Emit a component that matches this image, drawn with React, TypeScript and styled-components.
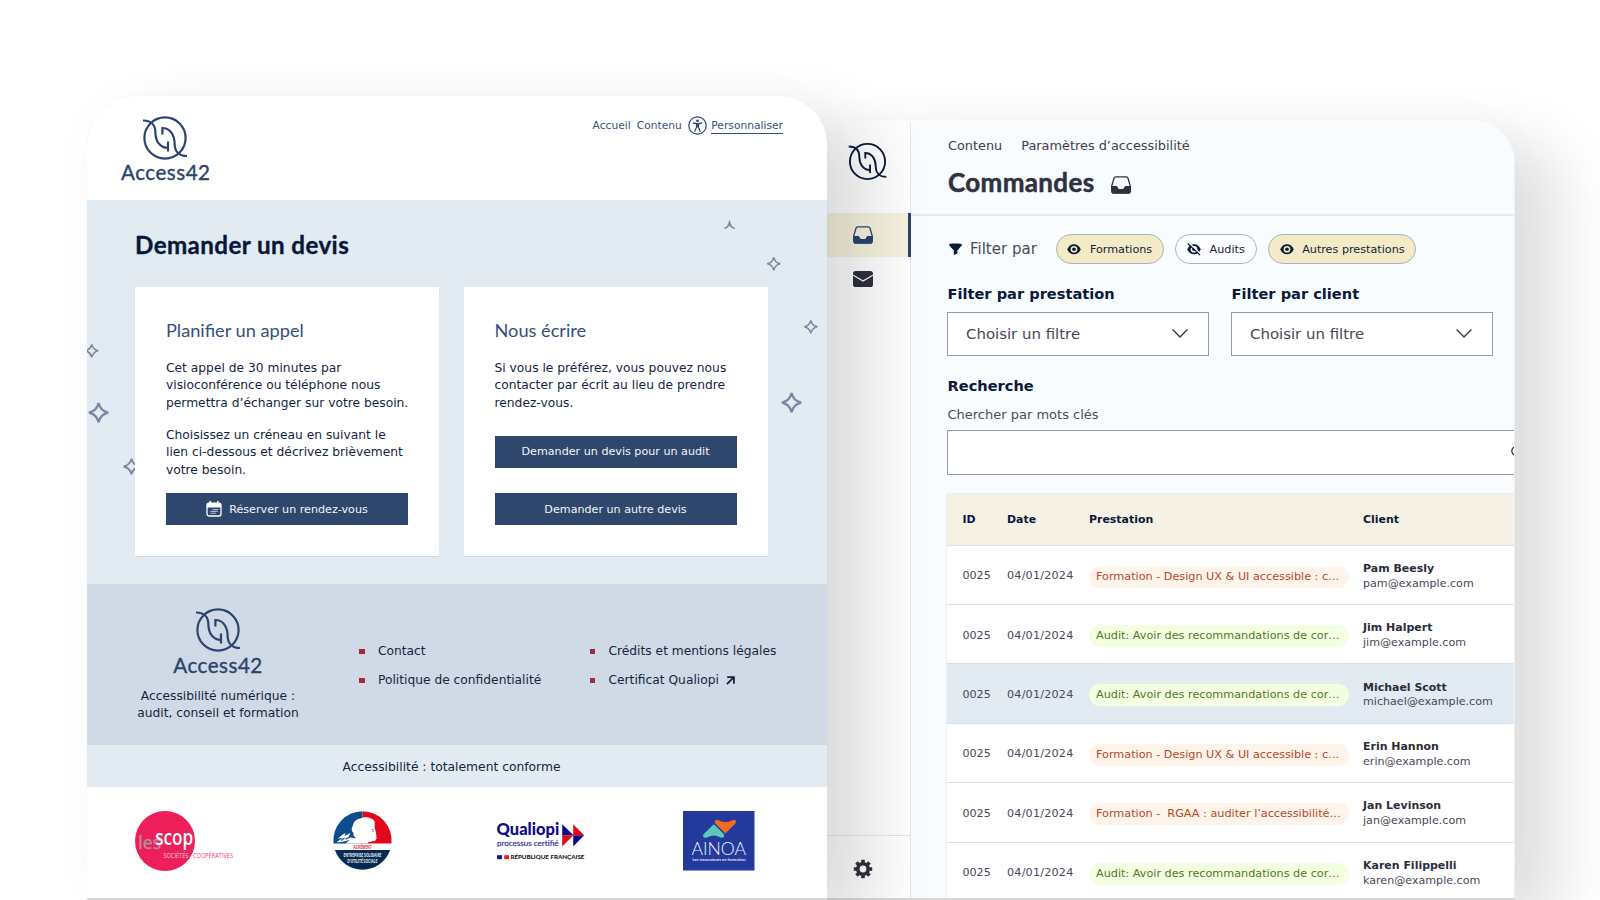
import React from 'react';
import styled, { createGlobalStyle } from 'styled-components';

const SANS = '"DejaVu Sans", Verdana, sans-serif';
const DISPLAY = 'Lato, "Open Sans", sans-serif';
const WINDOW_SHADOW = '45px 22px 60px rgba(0, 0, 0, 0.12), 0 0 60px rgba(0, 0, 0, 0.02)';

const GlobalStyle = createGlobalStyle`
  *, *::before, *::after { box-sizing: border-box; }
  body { margin: 0; background: #fff; font-family: ${SANS}; }
  h1, h2, p, ul { margin: 0; padding: 0; font-weight: 400; }
  ul { list-style: none; }
  svg { display: block; flex: none; overflow: visible; }
`;

const Stage = styled.div`
  width: 1600px;
  height: 900px;
  overflow: hidden;
  display: flex;
  align-items: stretch;
  padding-left: 87px;
  background: #fff;
`;

/* ---------- Public site window ---------- */

const SiteWindow = styled.main`
  position: relative;
  z-index: 1;
  flex: none;
  width: 740px;
  margin-top: 96px;
  border-radius: 48px 48px 0 0;
  border-bottom: 2px solid #d8d8d8;
  background: #fff;
  box-shadow: ${WINDOW_SHADOW}, 0 0 1px rgba(0, 0, 0, 0.1);
  display: flex;
  flex-direction: column;
`;

const SiteHeader = styled.header`
  display: flex;
  justify-content: space-between;
  height: 104px;
  padding: 17.5px 44px 0 34px;
`;

const Brand = styled.div`
  display: flex;
  flex-direction: column;
  align-items: center;
  color: #2c446d;
  svg { margin-right: 1px; }
`;

const BrandName = styled.span`
  margin-top: -1.2px;
  font: 400 20.6px/24px ${DISPLAY};
  letter-spacing: 0.5px;
  -webkit-text-stroke: 0.4px currentColor;
`;

const SiteNav = styled.nav`
  display: flex;
  align-items: center;
  align-self: flex-start;
  height: 19px;
  margin-top: 2.5px;
  font-size: 10.7px;
  line-height: 17px;
  color: #3a5078;
`;

const NavLink = styled.a<{ $gap: number; $active?: boolean }>`
  margin-left: ${(p) => p.$gap}px;
  padding-top: 1px;
  border-bottom: ${(p) => (p.$active ? '1px solid #3a5078' : '0')};
  line-height: ${(p) => (p.$active ? '15px' : '16px')};
`;

const NavIcon = styled.span`
  margin-left: 6px;
`;

const Hero = styled.section`
  position: relative;
  overflow: hidden;
  height: 383.5px;
  padding: 30px 58px 0 48px;
  background: #e2eaf2;
`;

const HeroTitle = styled.h1`
  font: 700 24.2px/30px ${DISPLAY};
  letter-spacing: 0.4px;
  -webkit-text-stroke: 0.35px currentColor;
  color: #05183a;
  margin-bottom: 27px;
`;

const CardRow = styled.div`
  position: relative;
  display: flex;
  gap: 24.5px;
`;

const Card = styled.article`
  width: 304px;
  height: 269px;
  padding: 31.3px 31px 0;
  background: #fff;
  box-shadow: 0 0.5px 1px rgba(40, 70, 110, 0.1);
`;

const CardTitle = styled.h2`
  font: 400 18.2px/24px ${DISPLAY};
  color: #34507a;
  margin-bottom: 17.9px;
  white-space: nowrap;
`;

const Paragraph = styled.p`
  font-size: 12.27px;
  line-height: 17.2px;
  color: #15253f;
  white-space: nowrap;
  & + & { margin-top: 15.4px; }
`;

const CardButton = styled.button<{ $top: number }>`
  display: flex;
  align-items: center;
  justify-content: center;
  gap: 7px;
  width: 100%;
  height: 32px;
  margin-top: ${(p) => p.$top}px;
  padding: 0;
  border: 0;
  background: #30476d;
  color: #f2f5f9;
  font: 11.15px/16px ${SANS};
  span { padding-top: 1.2px; }
`;

const Sparkle = styled.svg<{ $x: number; $y: number; $r: number }>`
  position: absolute;
  left: ${(p) => p.$x - p.$r}px;
  top: ${(p) => p.$y - p.$r}px;
  width: ${(p) => p.$r * 2}px;
  height: ${(p) => p.$r * 2}px;
`;

const SiteFooter = styled.footer`
  display: grid;
  grid-template-columns: 222.3px 230.5px auto;
  height: 161.5px;
  padding: 22.5px 0 0 50px;
  background: #cfdae6;
`;

const FooterBrand = styled(Brand)`
  width: 162px;
  justify-self: start;
`;

const Tagline = styled.p`
  margin-top: 11px;
  font-size: 12.27px;
  line-height: 17.2px;
  text-align: center;
  white-space: nowrap;
  color: #15253f;
`;

const LinkList = styled.ul`
  padding-top: 30.5px;
`;

const LinkItem = styled.li`
  display: flex;
  align-items: center;
  height: 29.5px;
  font-size: 12.25px;
  line-height: 29.5px;
  white-space: nowrap;
  color: #15253f;
  &::before {
    content: '';
    width: 5.4px;
    height: 5.4px;
    margin-right: 13.3px;
    background: #9e2b3c;
  }
  svg { margin-left: 7.5px; }
`;

const StatusBand = styled.p`
  height: 42px;
  padding-right: 11px;
  background: #e2eaf2;
  text-align: center;
  font-size: 12.3px;
  line-height: 44px;
  color: #15253f;
`;

const Partners = styled.div`
  flex: 1;
  display: flex;
  align-items: flex-start;
  padding: 24px 0 0 48px;
`;

const Partner = styled.div<{ $left?: number; $top?: number }>`
  margin-left: ${(p) => p.$left ?? 0}px;
  margin-top: ${(p) => p.$top ?? 0}px;
`;

/* ---------- Back-office window ---------- */

const AdminWindow = styled.main`
  flex: none;
  display: flex;
  width: 702.5px;
  margin: 120px 0 0 -15px;
  overflow: clip;
  border-top: 2px solid #fdfdfd;
  border-bottom: 2px solid #d8d8d8;
  border-radius: 44px 44px 0 0;
  background: #f9fcff;
  box-shadow: ${WINDOW_SHADOW};
`;

const Sidebar = styled.aside`
  display: flex;
  flex-direction: column;
  width: 99px;
  border-right: 1.5px solid #e0e8f1;
  background: #fdfdfe;
`;

const SidebarLogo = styled.div`
  height: 91px;
  padding: 19px 0 0 34.5px;
  color: #0b1c3e;
`;

const SidebarItem = styled.a<{ $active?: boolean }>`
  display: flex;
  align-items: center;
  height: 44px;
  padding-left: 41px;
  margin-right: -1px;
  color: ${(p) => (p.$active ? '#2c446d' : '#2f3040')};
  background: ${(p) => (p.$active ? '#f4f1de' : 'transparent')};
  border-right: ${(p) => (p.$active ? '3px solid #2c446d' : '0')};
`;

const SidebarFooter = styled.div`
  margin-top: auto;
  height: 63px;
  padding: 22.5px 0 0 41px;
  border-top: 1.5px solid #dfe4f0;
  color: #2f3040;
`;

const Content = styled.section`
  flex: 1;
  min-width: 0;
  overflow: hidden;
  border-right: 1.5px solid #efefef;
`;

const ContentHeader = styled.header`
  height: 93.5px;
  padding: 15.4px 0 0 37px;
  border-bottom: 2px solid #e2eaf2;
`;

const SkipLinks = styled.nav`
  display: flex;
  gap: 19px;
  font-size: 12.87px;
  line-height: 18px;
  color: #3f404e;
`;

const TitleRow = styled.div`
  display: flex;
  align-items: center;
  gap: 17px;
  margin-top: 10.6px;
  color: #2f3040;
  svg { margin-top: 5.5px; }
`;

const PageTitle = styled.h1`
  font: 700 26px/32px ${DISPLAY};
  letter-spacing: 0.34px;
  -webkit-text-stroke: 0.5px currentColor;
`;

const ContentBody = styled.div`
  padding: 18.5px 0 0 36px;
`;

const FilterRow = styled.div`
  display: flex;
  align-items: center;
  gap: 11.3px;
  height: 29.5px;
  padding-left: 1.5px;
`;

const FilterLabel = styled.span`
  display: flex;
  align-items: center;
  gap: 8.5px;
  margin-right: 7.5px;
  font-size: 15px;
  line-height: 20px;
  color: #4a4c5a;
  span { padding-top: 1.4px; }
`;

const Toggle = styled.button<{ $on?: boolean }>`
  display: flex;
  align-items: center;
  gap: 8.5px;
  height: 29.5px;
  padding: 0 10.8px;
  border: 1px solid #a7b2c6;
  border-radius: 15px;
  background: ${(p) => (p.$on ? '#f2ebc6' : '#fbfdff')};
  color: #15213d;
  font: 11.2px/16px ${SANS};
  span { padding-top: 2px; }
`;

const Fields = styled.div`
  display: flex;
  gap: 22px;
  margin-top: 20px;
`;

const Field = styled.div`
  width: 262px;
`;

const FieldLabel = styled.div`
  padding-left: 0.5px;
  font-size: 14.6px;
  font-weight: 700;
  line-height: 20px;
  white-space: nowrap;
  color: #0a1a3a;
`;

const Select = styled.div`
  display: flex;
  align-items: center;
  justify-content: space-between;
  height: 44.5px;
  margin-top: 8px;
  padding: 0 20.5px 0 18px;
  border: 1.5px solid #9499b0;
  background: #fff;
  font-size: 14.95px;
  color: #454756;
`;

const SearchBlock = styled.div`
  margin-top: 19.5px;
  width: 640px;
`;

const Hint = styled.div`
  margin-top: 10px;
  padding-left: 0.5px;
  font-size: 13px;
  line-height: 18px;
  color: #4a4c5a;
`;

const SearchInput = styled.div`
  display: flex;
  align-items: center;
  height: 45px;
  margin-top: 6.5px;
  padding-left: 563px;
  border: 1.5px solid #9499b0;
  background: #fff;
`;

const Table = styled.div`
  width: 640px;
  margin-top: 18.6px;
  box-shadow: 0 0 1.5px rgba(60, 90, 130, 0.25);
`;

const TableRow = styled.div<{ $selected?: boolean }>`
  display: grid;
  grid-template-columns: 44.5px 82px 274px 1fr;
  align-items: center;
  height: 59.4px;
  padding: 3.6px 0 0 15.5px;
  border-bottom: 1.5px solid #d7e1ec;
  background: ${(p) => (p.$selected ? '#e2eaf2' : '#fff')};
  font-size: 11.1px;
  line-height: 14.8px;
  color: #474958;
`;

const HeadRow = styled(TableRow)`
  height: 52px;
  background: #f5f2e5;
  font-weight: 700;
  font-size: 10.95px;
  color: #0a1a3a;
`;

const DateCell = styled.span`
  font-size: 11.2px;
  letter-spacing: 0.2px;
`;

const Tag = styled.span<{ $kind: Kind }>`
  display: block;
  width: 259.5px;
  height: 22px;
  padding-left: 7px;
  border-radius: 11px;
  font-size: 11.22px;
  line-height: 22px;
  white-space: pre;
  background: ${(p) => (p.$kind === 'audit' ? '#f4ffe1' : '#fff4ea')};
  color: ${(p) => (p.$kind === 'audit' ? '#4f7a26' : '#b24a2c')};
`;

const ClientName = styled.div`
  font-weight: 700;
  font-size: 10.98px;
  color: #2b2d3c;
`;

/* ---------- Icons and logos ---------- */

const Monogram = ({ size, stroke = 2.2 }: { size: number; stroke?: number }) => (
  <svg width={size} height={size} viewBox="-24 -24 48 48" fill="none" stroke="currentColor" strokeWidth={stroke}>
    <circle r="20.6" />
    <path d="M-22-17.5C-12.5-17.5-9.6-11.5-9.6-5.5C-9.6 3-5 10 3 10M3 3.4V13.6" />
    <path d="M22 18C12.5 18 9.6 11.5 9.6 5.5C9.6-3 5-10-2.6-10M-2.6-3.4V-11" />
  </svg>
);

const PersonIcon = () => (
  <svg width="19" height="19" viewBox="0 0 19 19" fill="none" stroke="#2c446d">
    <circle cx="9.5" cy="9.5" r="8.7" strokeWidth="1.2" />
    <circle cx="9.5" cy="4.8" r="1.35" fill="#2c446d" stroke="none" />
    <path d="M5.4 7L9.5 7.9L13.6 7" strokeWidth="1.3" strokeLinecap="round" />
    <path d="M10.5 7.8V11.2L12.2 15.2M8.5 7.8V11.2L6.8 15.2" strokeWidth="1.2" strokeLinecap="round" />
    <path d="M8.3 7.6H10.7V11.4H8.3Z" fill="#2c446d" stroke="none" />
  </svg>
);

const CalendarIcon = () => (
  <svg width="16" height="16" viewBox="0 0 16 16" fill="none">
    <rect x="1" y="2.2" width="14" height="12.8" rx="2.2" stroke="#fff" strokeWidth="1.3" />
    <path d="M1 4.4a2.2 2.2 0 0 1 2.2-2.2h9.6A2.2 2.2 0 0 1 15 4.4V6.4H1Z" fill="#fff" />
    <path d="M4.2.5V3M11.8.5V3" stroke="#fff" strokeWidth="1.5" strokeLinecap="round" />
    <path d="M6.5 8.6H12.4M4.4 10.5H11.6M4.4 12.3H10" stroke="#a9b6cb" strokeWidth="1.1" />
  </svg>
);

const ExternalArrow = () => (
  <svg width="9" height="9" viewBox="0 0 9 9" fill="none" stroke="#0f1f3a" strokeWidth="1.8">
    <path d="M1.2 1.1H7.9V7.8M7.6 1.4L.9 8.1" />
  </svg>
);

const InboxIcon = () => (
  <svg width="20" height="18" viewBox="0 0 20 18">
    <path
      d="M4.7.9H15.3A1.8 1.8 0 0 1 17 2.2L19.3 10V15A2.2 2.2 0 0 1 17.1 17.2H2.9A2.2 2.2 0 0 1 .7 15V10L3 2.2A1.8 1.8 0 0 1 4.7.9Z"
      fill="none"
      stroke="currentColor"
      strokeWidth="1.3"
    />
    <path
      d="M.4 10H5.8L7.4 12.4A1.4 1.4 0 0 0 8.5 13H11.5A1.4 1.4 0 0 0 12.6 12.4L14.2 10H19.6V15A2.4 2.4 0 0 1 17.2 17.6H2.8A2.4 2.4 0 0 1 .4 15Z"
      fill="currentColor"
    />
  </svg>
);

const MailIcon = () => (
  <svg width="20" height="16" viewBox="0 0 20 16" fill="currentColor">
    <path d="M0 2.6A2.6 2.6 0 0 1 2.6 0H17.4A2.6 2.6 0 0 1 20 2.6V3.4L10 9.3L0 3.4Z" />
    <path d="M0 4.8V13.4A2.6 2.6 0 0 0 2.6 16H17.4A2.6 2.6 0 0 0 20 13.4V4.8L10 10.7Z" />
  </svg>
);

const GearIcon = () => (
  <svg width="20" height="20" viewBox="-10 -10 20 20" fill="none" stroke="currentColor">
    <circle r="5.2" strokeWidth="3.6" />
    {[0, 45, 90, 135].map((a) => (
      <path key={a} d="M0-9.2V-6M0 9.2V6" strokeWidth="3.6" transform={`rotate(${a})`} />
    ))}
  </svg>
);

const FunnelIcon = () => (
  <svg width="13" height="12" viewBox="0 0 13 12" fill="#0b1a36">
    <path d="M.3 1.2C.3.2 12.7.2 12.7 1.2V2.6L8.4 7.4V10.6L4.8 12V7.4L.3 2.6Z" />
  </svg>
);

const EyeIcon = ({ off }: { off?: boolean }) => (
  <svg width="14" height="12.5" viewBox=".5 0 14 13">
    <path d="M.6 6.5C2.6-.6 12.4-.6 14.4 6.5C12.4 13.6 2.6 13.6.6 6.5Z" fill="#0b1a36" />
    <circle cx="7.5" cy="6.5" r="3.5" fill={off ? '#fbfdff' : '#f2ebc6'} />
    <circle cx="7.5" cy="6.5" r="1.9" fill="#0b1a36" />
    {off && (
      <>
        <path d="M1.9 -.4L14.6 11.4" stroke="#fbfdff" strokeWidth="1.4" />
        <path d="M.9 .6L13.8 12.6" stroke="#0b1a36" strokeWidth="1.3" />
      </>
    )}
  </svg>
);

const ChevronIcon = () => (
  <svg width="16" height="9" viewBox="0 0 16 9" fill="none" stroke="#3a3c4a" strokeWidth="1.4">
    <path d="M.6.6L8 8L15.4.6" />
  </svg>
);

const SearchIcon = () => (
  <svg width="14" height="14" viewBox="0 0 14 14" fill="none" stroke="#3a3c4a" strokeWidth="1.3">
    <circle cx="5" cy="5" r="4.2" />
    <path d="M8 8L13 13" />
  </svg>
);

const ScopLogo = () => (
  <svg width="100" height="60" viewBox="0 0 100 60" fontFamily="Open Sans, sans-serif">
    <circle cx="30" cy="30" r="30" fill="#ec1f5b" />
    <text x="3.2" y="37.8" fontSize="19" fill="#b3939e" stroke="#b3939e" strokeWidth=".3" textLength="23" lengthAdjust="spacingAndGlyphs">les</text>
    <text x="20.2" y="34.2" fontSize="21" fontWeight="600" fill="#fff" textLength="38" lengthAdjust="spacingAndGlyphs">scop</text>
    <text x="28.4" y="46.8" fontSize="6.6" fill="#fbd3df" textLength="25" lengthAdjust="spacingAndGlyphs">SOCIÉTÉS</text>
    <text x="58" y="46.8" fontSize="6.6" fill="#ec3b70" textLength="40" lengthAdjust="spacingAndGlyphs">COOPÉRATIVES</text>
  </svg>
);

const AgreementLogo = () => (
  <svg width="59" height="59" viewBox="-29.5 -29.5 59 59" fontFamily="Open Sans, sans-serif" fontWeight="700">
    <path d="M0-29.2A29.2 29.2 0 0 0-29 3H0Z" fill="#0b4d8c" />
    <path d="M0-29.2A29.2 29.2 0 0 1 29 3H0Z" fill="#e3081b" />
    <path d="M-27.6 9.6H27.6A29.2 29.2 0 0 1-27.6 9.6Z" fill="#062b52" />
    <path
      d="M9.5-21.5C6-24 1-23.6-2-22C-7-21.5-9-18-9.6-15C-11.5-12-11-9.5-9-7.5C-9.5-5-8.5-3.5-6.5-2.8L-12 .5L-8 3.1H4.5C6 .8 9 1 12.8 .2C13.6-.6 13-1.5 14.2-2C13.5-4.5 14.2-5 13.6-6.8L13.3-8.8C13-11 11.6-12 12.2-15C12.5-18 12.5-20 9.5-21.5Z"
      fill="#fff"
    />
    <path d="M-24.5-2L-20.5-5.5L-17-7.5L-18-4.5L-12-7.5L-14-3.5L-7-2L-7 3.1H-17L-13-.5L-21 1.5L-26 1.8L-20-2.5Z" fill="#fff" />
    <path d="M-17-1.2L-12.5-3.5M-21.5 0L-18-2.5" stroke="#0b4d8c" strokeWidth="1.1" />
    <path d="M9.2-11.2L11.5-10.5M9.8-9.2L11-9" stroke="#5a5a66" strokeWidth=".8" />
    <text x="-9.3" y="8.6" fontSize="5.4" fill="#d93a44" textLength="18.6" lengthAdjust="spacingAndGlyphs">AGRÉMENT</text>
    <text x="-19" y="16.6" fontSize="5.6" fill="#e8edf3" textLength="38" lengthAdjust="spacingAndGlyphs">ENTREPRISE SOLIDAIRE</text>
    <text x="-15.2" y="22.3" fontSize="5.6" fill="#e8edf3" textLength="30" lengthAdjust="spacingAndGlyphs">D’UTILITÉ SOCIALE</text>
  </svg>
);

const QualiopiLogo = () => (
  <svg width="89" height="38" viewBox="0 0 89 38" fontFamily="Lato, sans-serif">
    <text x="-.4" y="12.3" fontSize="16.2" fontWeight="900" fill="#0a0a8c" textLength="62.6" lengthAdjust="spacingAndGlyphs">Qualiopi</text>
    <text x="0" y="23.3" fontSize="8" fill="#26269c" stroke="#26269c" strokeWidth=".15" textLength="61.5" lengthAdjust="spacingAndGlyphs">processus certifié</text>
    <path d="M65.2 1.3L76.5 12.3H65.2ZM76.2 12.3H87.2L76.2 23.4Z" fill="#0a0a8c" />
    <path d="M65.2 12.3H76.5L65.2 23.4ZM76.2 1.3L87.2 12.3H76.2Z" fill="#e3081b" />
    <path d="M0 32.2H5V36.2H0Z" fill="#16168f" />
    <path d="M7.2 32.2H12V36.2H7.2Z" fill="#e0202e" />
    <text x="13.4" y="36.4" fontSize="6" fontWeight="900" fill="#16161e" textLength="74" lengthAdjust="spacingAndGlyphs">RÉPUBLIQUE FRANÇAISE</text>
  </svg>
);

const AinoaLogo = () => (
  <svg width="71.5" height="59.5" viewBox="0 0 71.5 59.5" fontFamily="Lato, sans-serif">
    <rect width="71.5" height="59.5" fill="#233a9c" />
    <path d="M30.8 13.2L40.6 22.8Q42 24.6 40.8 26Q39.4 27.4 37 26.2Q31 22.8 24.4 26.2Q21.8 27.4 20.4 26Q19.4 24.4 21 22.8Z" fill="#5cc8bb" />
    <path d="M42.4 22.6L32.6 12.8Q31.2 11 32.2 9.6Q33.6 8.2 36 9.4Q42.2 12.8 48.8 9.4Q51.4 8.2 52.6 9.6Q53.6 11.2 52.2 12.8Z" fill="#f26b21" />
    <text x="8.4" y="43.6" fontSize="17" fontWeight="300" fill="#f0f3fb" textLength="54.6" lengthAdjust="spacingAndGlyphs">AINOA</text>
    <text x="9.6" y="50.2" fontSize="4.3" fontWeight="700" fill="#e4e9f6" textLength="53" lengthAdjust="spacingAndGlyphs">Les innovateurs en formation</text>
  </svg>
);

/* ---------- Data ---------- */

type Kind = 'audit' | 'formation';

const STAR = 'M0-8.3Q1.5-1.5 8.3 0Q1.5 1.5 0 8.3Q-1.5 1.5-8.3 0Q-1.5-1.5 0-8.3Z';
const STAR_TIP = 'M-7.4 5C-3.5 4-1.2 0 0-5.5C1.2 0 3.5 4 7.4 5L4 5Q1.2 3.4 0 .8Q-1.2 3.4-4 5Z';

const SPARKLES: { x: number; y: number; r: number; tip?: boolean }[] = [
  { x: 642.5, y: 24, r: 7.5, tip: true },
  { x: 687.2, y: 63.5, r: 7.8 },
  { x: 724, y: 126.3, r: 7.8 },
  { x: 704.5, y: 202.5, r: 11.6 },
  { x: 4.4, y: 150.5, r: 7.8 },
  { x: 11.8, y: 212.5, r: 11.6 },
  { x: 44.5, y: 266, r: 9.5 },
  { x: 54.3, y: 157.3, r: 7.8 },
];

const ORDERS: { kind: Kind; label: string; name: string; mail: string; selected?: boolean }[] = [
  { kind: 'formation', label: 'Formation - Design UX & UI accessible : c…', name: 'Pam Beesly', mail: 'pam@example.com' },
  { kind: 'audit', label: 'Audit: Avoir des recommandations de cor…', name: 'Jim Halpert', mail: 'jim@example.com' },
  { kind: 'audit', label: 'Audit: Avoir des recommandations de cor…', name: 'Michael Scott', mail: 'michael@example.com', selected: true },
  { kind: 'formation', label: 'Formation - Design UX & UI accessible : c…', name: 'Erin Hannon', mail: 'erin@example.com' },
  { kind: 'formation', label: 'Formation -  RGAA : auditer l’accessibilité…', name: 'Jan Levinson', mail: 'jan@example.com' },
  { kind: 'audit', label: 'Audit: Avoir des recommandations de cor…', name: 'Karen Filippelli', mail: 'karen@example.com' },
];

const Site = () => (
  <SiteWindow>
    <SiteHeader>
      <Brand>
        <Monogram size={48} />
        <BrandName>Access42</BrandName>
      </Brand>
      <SiteNav>
        <NavLink $gap={0}>Accueil</NavLink>
        <NavLink $gap={6}>Contenu</NavLink>
        <NavIcon><PersonIcon /></NavIcon>
        <NavLink $gap={4.5} $active>Personnaliser</NavLink>
      </SiteNav>
    </SiteHeader>
    <Hero>
      {SPARKLES.map((s) => (
        <Sparkle key={s.x} $x={s.x} $y={s.y} $r={s.r} viewBox="-10 -10 20 20">
          <path d={s.tip ? STAR_TIP : STAR} fill={s.tip ? '#7b87a0' : 'none'} stroke="#7b87a0" strokeWidth={s.tip ? 0.8 : 2} />
        </Sparkle>
      ))}
      <HeroTitle>Demander un devis</HeroTitle>
      <CardRow>
        <Card>
          <CardTitle>Planifier un appel</CardTitle>
          <Paragraph>
            Cet appel de 30 minutes par<br />visioconférence ou téléphone nous<br />permettra d’échanger sur votre besoin.
          </Paragraph>
          <Paragraph>
            Choisissez un créneau en suivant le<br />lien ci-dessous et décrivez brièvement<br />votre besoin.
          </Paragraph>
          <CardButton $top={14.3}><CalendarIcon /><span>Réserver un rendez-vous</span></CardButton>
        </Card>
        <Card>
          <CardTitle>Nous écrire</CardTitle>
          <Paragraph>
            Si vous le préférez, vous pouvez nous<br />contacter par écrit au lieu de prendre<br />rendez-vous.
          </Paragraph>
          <CardButton $top={23.8}><span>Demander un devis pour un audit</span></CardButton>
          <CardButton $top={25.5}><span>Demander un autre devis</span></CardButton>
        </Card>
      </CardRow>
    </Hero>
    <SiteFooter>
      <FooterBrand>
        <Monogram size={48} />
        <BrandName>Access42</BrandName>
        <Tagline>Accessibilité numérique :<br />audit, conseil et formation</Tagline>
      </FooterBrand>
      <LinkList>
        <LinkItem>Contact</LinkItem>
        <LinkItem>Politique de confidentialité</LinkItem>
      </LinkList>
      <LinkList>
        <LinkItem>Crédits et mentions légales</LinkItem>
        <LinkItem>Certificat Qualiopi<ExternalArrow /></LinkItem>
      </LinkList>
    </SiteFooter>
    <StatusBand>Accessibilité : totalement conforme</StatusBand>
    <Partners>
      <Partner><ScopLogo /></Partner>
      <Partner $left={98}><AgreementLogo /></Partner>
      <Partner $left={105} $top={11.5}><QualiopiLogo /></Partner>
      <Partner $left={97}><AinoaLogo /></Partner>
    </Partners>
  </SiteWindow>
);

const Admin = () => (
  <AdminWindow>
    <Sidebar>
      <SidebarLogo><Monogram size={41} /></SidebarLogo>
      <SidebarItem $active><InboxIcon /></SidebarItem>
      <SidebarItem><MailIcon /></SidebarItem>
      <SidebarFooter><GearIcon /></SidebarFooter>
    </Sidebar>
    <Content>
      <ContentHeader>
        <SkipLinks>
          <span>Contenu</span>
          <span>Paramètres d’accessibilité</span>
        </SkipLinks>
        <TitleRow>
          <PageTitle>Commandes</PageTitle>
          <InboxIcon />
        </TitleRow>
      </ContentHeader>
      <ContentBody>
        <FilterRow>
          <FilterLabel><FunnelIcon /><span>Filter par</span></FilterLabel>
          <Toggle $on><EyeIcon /><span>Formations</span></Toggle>
          <Toggle><EyeIcon off /><span>Audits</span></Toggle>
          <Toggle $on><EyeIcon /><span>Autres prestations</span></Toggle>
        </FilterRow>
        <Fields>
          <Field>
            <FieldLabel>Filter par prestation</FieldLabel>
            <Select>Choisir un filtre<ChevronIcon /></Select>
          </Field>
          <Field>
            <FieldLabel>Filter par client</FieldLabel>
            <Select>Choisir un filtre<ChevronIcon /></Select>
          </Field>
        </Fields>
        <SearchBlock>
          <FieldLabel>Recherche</FieldLabel>
          <Hint>Chercher par mots clés</Hint>
          <SearchInput><SearchIcon /></SearchInput>
        </SearchBlock>
        <Table>
          <HeadRow>
            <span>ID</span>
            <span>Date</span>
            <span>Prestation</span>
            <span>Client</span>
          </HeadRow>
          {ORDERS.map((o) => (
            <TableRow key={o.name} $selected={o.selected}>
              <span>0025</span>
              <DateCell>04/01/2024</DateCell>
              <Tag $kind={o.kind}>{o.label}</Tag>
              <div>
                <ClientName>{o.name}</ClientName>
                {o.mail}
              </div>
            </TableRow>
          ))}
        </Table>
      </ContentBody>
    </Content>
  </AdminWindow>
);

export default function App() {
  return (
    <>
      <GlobalStyle />
      <Stage>
        <Site />
        <Admin />
      </Stage>
    </>
  );
}
